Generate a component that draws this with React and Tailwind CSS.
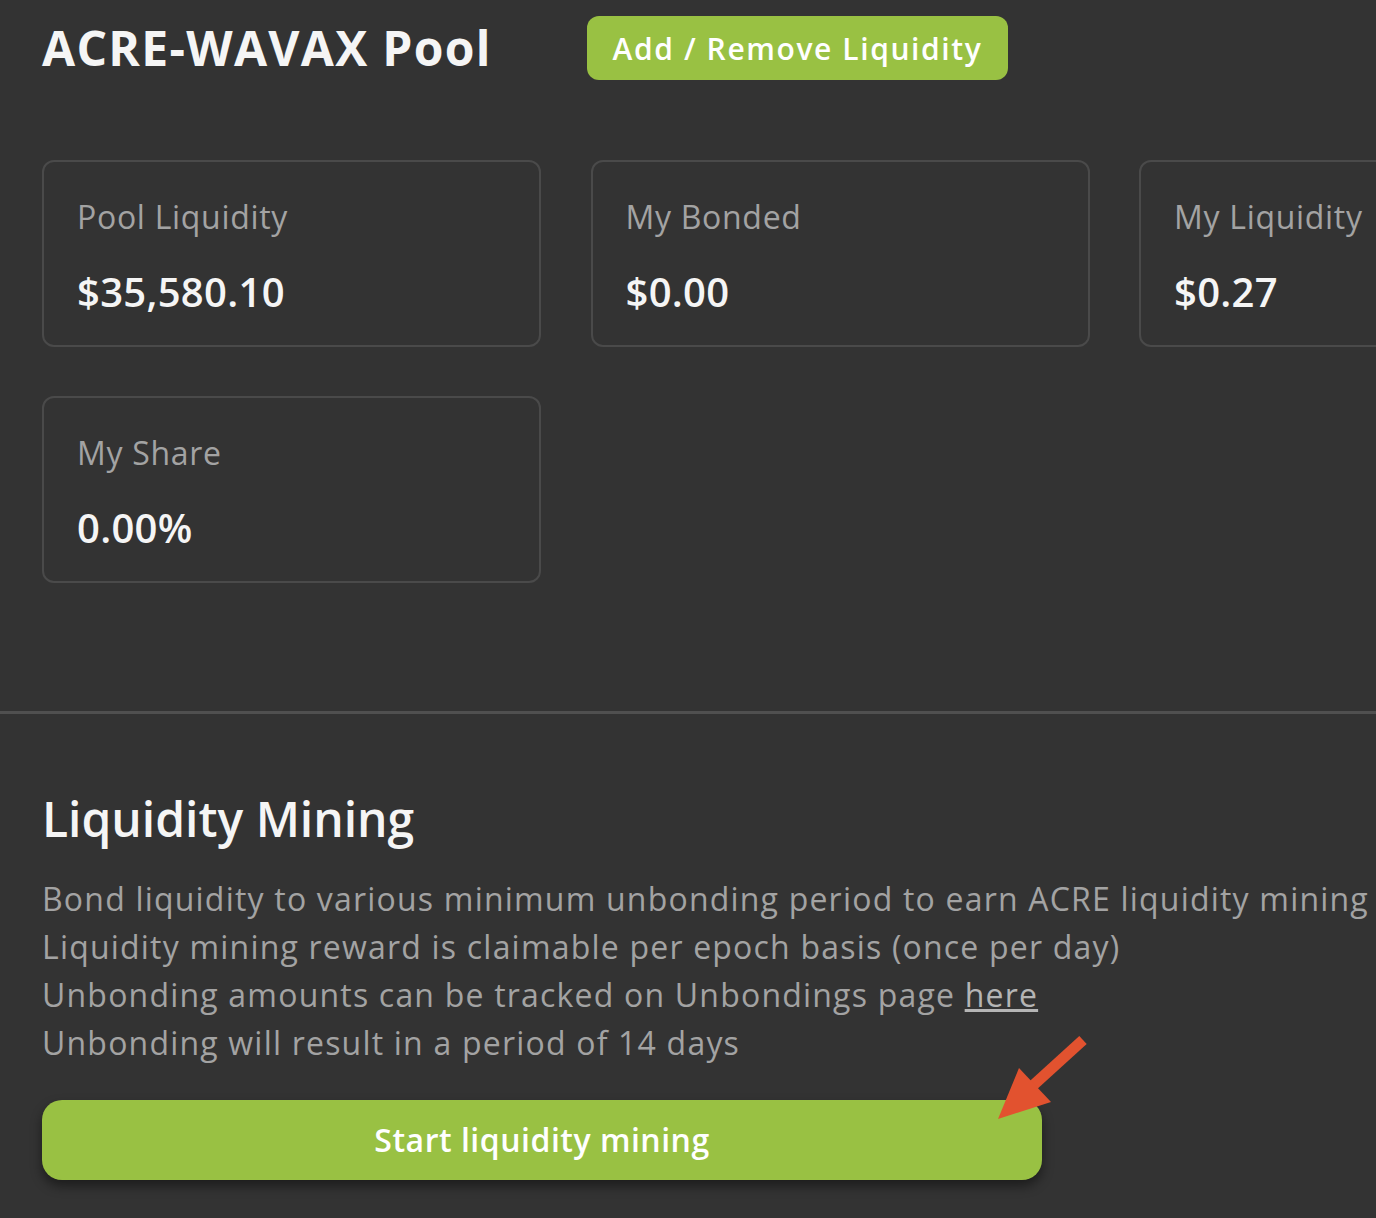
import React from "react";

const cards = [
  { label: "Pool Liquidity", value: "$35,580.10" },
  { label: "My Bonded", value: "$0.00" },
  { label: "My Liquidity", value: "$0.27" },
  { label: "My Share", value: "0.00%" },
];

function Card({ label, value }) {
  return (
    <div className="h-[187px] rounded-[12px] border-2 border-[#4a4a4a] pt-[31px] pl-[33px]">
      <div className="text-[32px] leading-[48px] text-[#a3a3a3] font-medium tracking-[0.7px]">{label}</div>
      <div className="mt-[27px] text-[40px] leading-[48px] text-[#f5f5f5] font-semibold tracking-[0.3px]">{value}</div>
    </div>
  );
}

export default function App() {
  return (
    <div
      className="relative w-[1376px] h-[1218px] overflow-hidden bg-[#333333]"
      style={{ fontFamily: '"Open Sans", "Noto Sans", sans-serif' }}
    >
      <div className="pl-[42px] pt-[16px] flex items-center">
        <div className="w-[545px] text-[48px] leading-[64px] font-bold text-[#f5f5f5] tracking-[1.3px]">
          ACRE-WAVAX Pool
        </div>
        <div className="h-[64px] w-[421px] rounded-[12px] bg-[#99c143] flex items-center justify-center text-[30px] font-semibold text-white tracking-[1.6px]">
          Add / Remove Liquidity
        </div>
      </div>

      <div className="mt-[80px] pl-[42px] grid grid-cols-[499px_499px_499px] gap-x-[49.5px] gap-y-[49px]">
        {cards.map((c) => (
          <Card key={c.label} {...c} />
        ))}
      </div>

      <div className="mt-[128px] h-[3px] bg-[#505050]" />

      <div className="pl-[42px] pt-[73px]">
        <div className="text-[48px] leading-[64px] font-semibold text-[#f5f5f5]">Liquidity Mining</div>
        <div className="mt-[24px] text-[32px] leading-[48px] text-[#a3a3a3] whitespace-nowrap tracking-[1.2px]">
          <div>Bond liquidity to various minimum unbonding period to earn ACRE liquidity mining</div>
          <div>Liquidity mining reward is claimable per epoch basis (once per day)</div>
          <div>
            Unbonding amounts can be tracked on Unbondings page{" "}
            <span className="underline text-[#b5b5b5]">here</span>
          </div>
          <div>Unbonding will result in a period of 14 days</div>
        </div>
        <div className="mt-[33px] w-[1000px] h-[80px] rounded-[20px] bg-[#99c143] shadow-[0_6px_12px_rgba(0,0,0,0.45)] flex items-center justify-center text-[32px] font-semibold text-white tracking-[0.5px]">
          Start liquidity mining
        </div>
      </div>

      <svg className="absolute left-[990px] top-[1030px]" width="110" height="100" viewBox="0 0 110 100">
        <line x1="93" y1="10" x2="38" y2="60" stroke="#e2522f" strokeWidth="11" strokeLinecap="butt" />
        <polygon points="8,89 29,38 61,72" fill="#e2522f" />
      </svg>
    </div>
  );
}
